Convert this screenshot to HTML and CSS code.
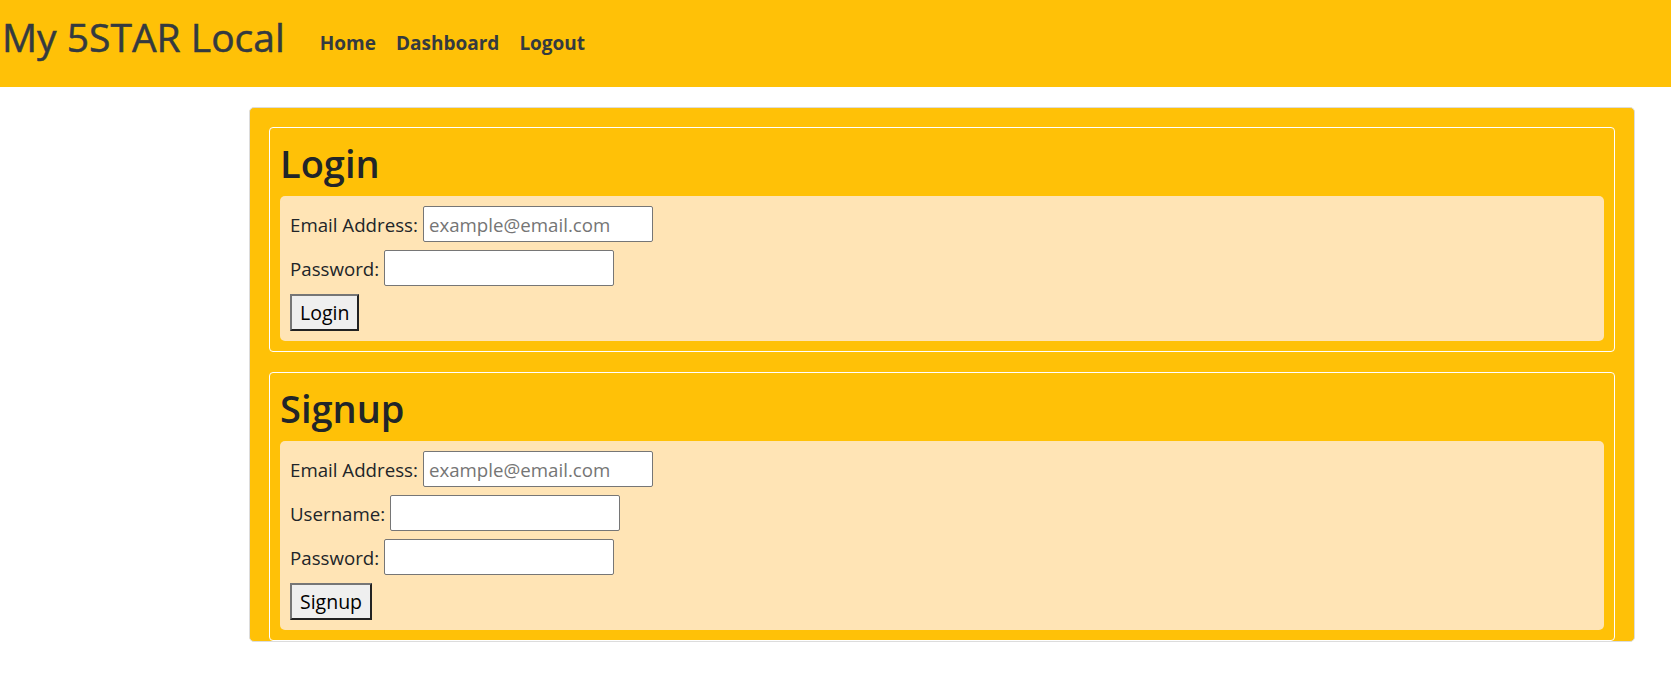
FILE: index.html
```html
<!DOCTYPE html>
<html lang="en">
<head>
<meta charset="utf-8">
<title>My 5STAR Local</title>
<link rel="stylesheet" href="styles.css">
</head>
<body>
<nav class="navbar">
  <a class="brand" href="#">My 5STAR Local</a>
  <ul class="nav-links">
    <li><a href="#">Home</a></li>
    <li><a href="#">Dashboard</a></li>
    <li><a href="#">Logout</a></li>
  </ul>
</nav>
<main class="outer">
  <section class="card">
    <h1 class="card-title">Login</h1>
    <form class="panel">
      <div class="row"><label>Email Address:</label><input type="email" placeholder="example@email.com"></div>
      <div class="row"><label>Password:</label><input type="password"></div>
      <div class="row"><button type="button" class="btn">Login</button></div>
    </form>
  </section>
  <section class="card">
    <h1 class="card-title">Signup</h1>
    <form class="panel">
      <div class="row"><label>Email Address:</label><input type="email" placeholder="example@email.com"></div>
      <div class="row"><label>Username:</label><input type="text"></div>
      <div class="row"><label>Password:</label><input type="password"></div>
      <div class="row"><button type="button" class="btn">Signup</button></div>
    </form>
  </section>
</main>
</body>
</html>
```
FILE: styles.css
```css
* { box-sizing: border-box; }
html, body { margin: 0; padding: 0; }
body {
  font-family: "Open Sans", "Noto Sans", sans-serif;
  font-size: 18.7px;
  line-height: 1.5;
  color: #212529;
  background: #fff;
}
.navbar {
  height: 87px;
  background: #ffc107;
  display: flex;
  align-items: flex-start;
  padding: 13px 0 0 2px;
}
.brand {
  font-size: 39px;
  font-weight: 400;
  line-height: 47px;
  color: #343a40;
  text-decoration: none;
  margin-right: 25px;
  white-space: nowrap;
  -webkit-text-stroke: 0.5px #343a40;
}
.nav-links {
  list-style: none;
  margin: 16px 0 0 0;
  padding: 0;
  display: flex;
}
.nav-links a {
  display: block;
  padding: 0 10px;
  font-size: 19px;
  font-weight: 700;
  line-height: 28px;
  color: #343a40;
  text-decoration: none;
}
.outer {
  margin: 20px 36px 0 249px;
  background: #ffc107;
  border: 1px solid #dcdcdc;
  border-radius: 5px;
  padding: 19px 19px 0;
  display: flex;
  flex-direction: column;
  gap: 20px;
}
.card {
  border: 1px solid #fff;
  border-radius: 4px;
  padding: 10px 10px 10px;
}
.card-title {
  margin: 0 0 9px;
  padding-top: 1px;
  font-size: 38px;
  font-weight: 600;
  line-height: 48px;
  color: #212529;
}
.panel {
  margin: 0;
  background: #ffe4b5;
  border-radius: 5px;
  padding: 10px;
  display: flex;
  flex-direction: column;
  gap: 8px;
}
.row {
  display: flex;
  align-items: center;
  gap: 5px;
}
.row label { white-space: nowrap; padding-top: 2px; }
.row input {
  width: 230px;
  height: 36px;
  border: 1px solid #767676;
  border-radius: 2px;
  padding: 1px 5px;
  font-family: inherit;
  font-size: 18.7px;
  color: #212529;
  background: #fff;
}
.row input::placeholder { color: #757575; }
.btn {
  height: 37px;
  padding: 0 8px;
  font-family: inherit;
  font-size: 19.5px;
  color: #000;
  background: #efefef;
  border: 2px solid;
  border-color: #767676 #222 #222 #767676;
  border-radius: 0;
}
```
